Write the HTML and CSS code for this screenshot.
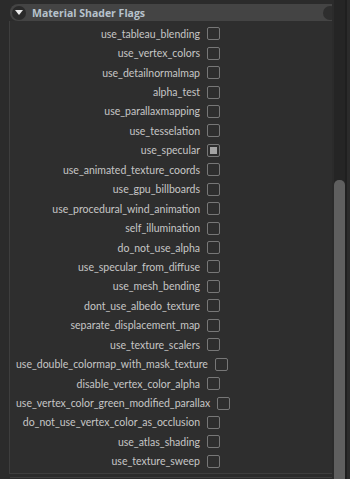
FILE: index.html
```html
<!DOCTYPE html>
<html lang="en">
<head>
    <meta charset="UTF-8">
    <meta name="viewport" content="width=device-width, initial-scale=1.0">
    <title>Material Shader Flags</title>
    <link rel="stylesheet" href="styles.css">
</head>
<body>
    <div class="window">
        <div class="main">
            <div class="section-header">
                <span class="toggle">
                    <svg width="8" height="6" viewBox="0 0 8 6"><polygon points="0,0 8,0 4,5" fill="#e8e8e8"/></svg>
                </span>
                <span class="section-title">Material Shader Flags</span>
                <span class="header-knob"></span>
            </div>
            <div class="section-body">
                <div class="row"><span class="label">use_tableau_blending</span><span class="check"></span></div>
                <div class="row"><span class="label">use_vertex_colors</span><span class="check"></span></div>
                <div class="row"><span class="label">use_detailnormalmap</span><span class="check"></span></div>
                <div class="row"><span class="label">alpha_test</span><span class="check"></span></div>
                <div class="row"><span class="label">use_parallaxmapping</span><span class="check"></span></div>
                <div class="row"><span class="label">use_tesselation</span><span class="check"></span></div>
                <div class="row"><span class="label">use_specular</span><span class="check checked"></span></div>
                <div class="row"><span class="label">use_animated_texture_coords</span><span class="check"></span></div>
                <div class="row"><span class="label">use_gpu_billboards</span><span class="check"></span></div>
                <div class="row"><span class="label">use_procedural_wind_animation</span><span class="check"></span></div>
                <div class="row"><span class="label">self_illumination</span><span class="check"></span></div>
                <div class="row"><span class="label">do_not_use_alpha</span><span class="check"></span></div>
                <div class="row"><span class="label">use_specular_from_diffuse</span><span class="check"></span></div>
                <div class="row"><span class="label">use_mesh_bending</span><span class="check"></span></div>
                <div class="row"><span class="label">dont_use_albedo_texture</span><span class="check"></span></div>
                <div class="row"><span class="label">separate_displacement_map</span><span class="check"></span></div>
                <div class="row"><span class="label">use_texture_scalers</span><span class="check"></span></div>
                <div class="row"><span class="label">use_double_colormap_with_mask_texture</span><span class="check"></span></div>
                <div class="row"><span class="label">disable_vertex_color_alpha</span><span class="check"></span></div>
                <div class="row"><span class="label">use_vertex_color_green_modified_parallax</span><span class="check"></span></div>
                <div class="row"><span class="label">do_not_use_vertex_color_as_occlusion</span><span class="check"></span></div>
                <div class="row"><span class="label">use_atlas_shading</span><span class="check"></span></div>
                <div class="row"><span class="label">use_texture_sweep</span><span class="check"></span></div>
            </div>
            <div class="next-section"></div>
        </div>
        <div class="scrollbar">
            <div class="thumb"></div>
        </div>
    </div>
</body>
</html>
```

FILE: styles.css
```css
html, body {
    margin: 0;
    height: 100%;
    overflow: hidden;
}
body {
    background-color: #2b2b2b;
    font-family: 'Lato', 'Open Sans', sans-serif;
    font-size: 10.5px;
    color: #c6c6c6;
}
.window {
    display: flex;
    height: 479px;
}
.main {
    width: 332px;
    padding: 4px 0 0 9px;
    box-sizing: border-box;
}
.section-header {
    display: flex;
    align-items: center;
    height: 17px;
    margin-left: 1px;
    background-color: #444444;
    border-radius: 8px 0 0 8px;
    overflow: hidden;
}
.toggle {
    width: 14px;
    height: 14px;
    margin-left: 2px;
    border-radius: 50%;
    background-color: #2a2a2a;
    display: flex;
    align-items: center;
    justify-content: center;
}
.toggle svg {
    margin-top: 1px;
}
.section-title {
    margin-left: 6px;
    font-family: 'Open Sans', sans-serif;
    font-weight: bold;
    font-size: 10.5px;
    color: #b7c2cc;
    flex: 1;
}
.header-knob {
    width: 14px;
    height: 14px;
    border-radius: 50%;
    background-color: #2e2e2e;
    margin-right: -5px;
}
.section-body {
    background-color: #2e2e2e;
    border-left: 1px solid #3e3e3e;
    border-bottom: 1px solid #3e3e3e;
    padding: 3px 0 0 6px;
    height: 453px;
    box-sizing: border-box;
}
.row {
    display: flex;
    align-items: center;
    height: 19.45px;
}
.label {
    min-width: 184px;
    text-align: right;
    white-space: nowrap;
}
.check {
    width: 11px;
    height: 11px;
    margin-left: 7px;
    border: 1.5px solid #777777;
    border-radius: 2px;
    display: flex;
    align-items: center;
    justify-content: center;
}
.check.checked::after {
    content: "";
    width: 7px;
    height: 7px;
    background-color: #a4a4a4;
}
.next-section {
    margin-top: 3px;
    margin-left: 1px;
    height: 6px;
    border-top: 1px solid #3e3e3e;
}
.scrollbar {
    width: 11px;
    margin-left: 2px;
    background-color: #252525;
    border-right: 2px solid #1f1f1f;
    position: relative;
}
.thumb {
    position: absolute;
    left: 0;
    right: 0;
    top: 180px;
    bottom: 0;
    background-color: #5f5f5f;
    border-radius: 5px 5px 0 0;
}
```
